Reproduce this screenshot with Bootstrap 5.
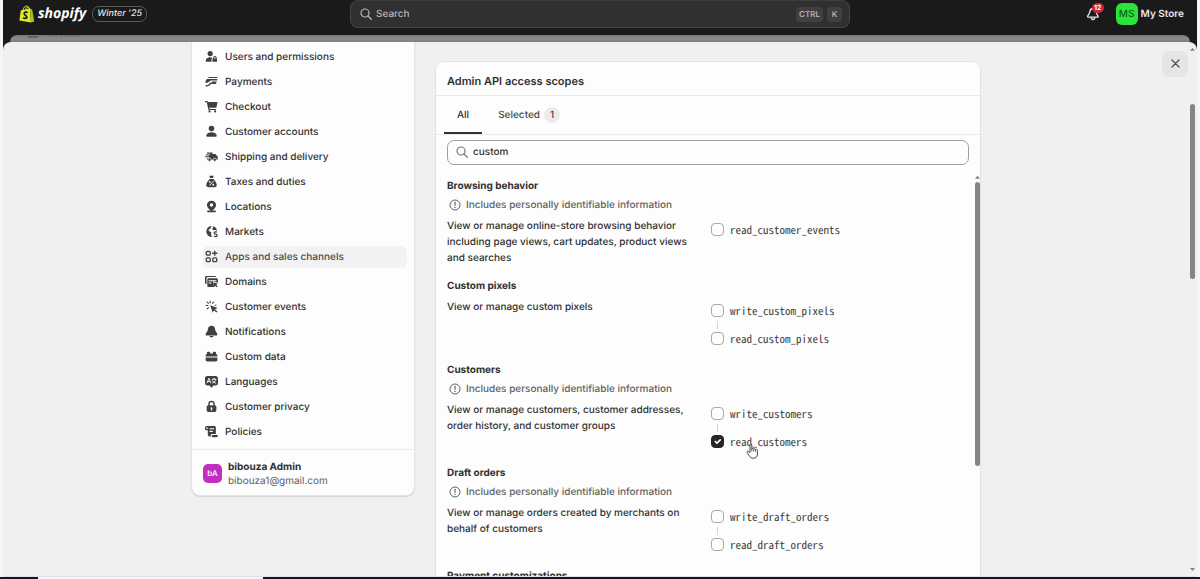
<!DOCTYPE html>
<html lang="en">
<head>
<meta charset="utf-8">
<meta name="viewport" content="width=device-width, initial-scale=1">
<title>Settings - My Store</title>
<link href="https://cdn.jsdelivr.net/npm/bootstrap@5.3.0/dist/css/bootstrap.min.css" rel="stylesheet">
<style>
  body { font-family: Inter, "Liberation Sans", sans-serif; font-size: 10px; line-height: 16px; color: #303030; background: #f5f5f6; font-weight: 450; text-rendering: geometricPrecision; }
  button, input { font: inherit; color: inherit; text-rendering: inherit; }
  .frame { margin: 0 3px; min-height: 0; background: linear-gradient(#1a1a1a 80px, #f8f8fb 80px); }
  .topbar { height: 35px; padding: 0 13px 7px; }
  .bag { margin: 0 3px; }
  .wordmark { font: italic 700 14px/20px "Open Sans", sans-serif; color: #fff; }
  .edition { font-size: 9px; line-height: 14px; font-weight: 500; font-style: italic; color: #e3e3e3; border: 1px solid #5a5a5a; border-radius: 7px; padding: 0 4px; margin-left: 6px; }
  .topsearch { width: 500px; height: 28px; background: #303030; border: 1px solid #444; border-top-color: #3c3c3c; border-radius: 8px; color: #b5b5b5; padding: 0 7px 0 9px; }
  .key { background: #404040; border-radius: 4px; font-size: 8px; line-height: 15px; font-weight: 600; padding: 0 3px; min-width: 15px; }
  .bell { width: 14px; height: 16px; color: #e3e3e3; margin-right: 16px; }
  .alerts { right: -4px; top: -3px; min-width: 12px; height: 10px; background: #c5283d; color: #fff; font-size: 7px; line-height: 10px; font-weight: 700; border-radius: 5px; }
  .store-tile { width: 22px; height: 22px; border-radius: 6px; background: #2be33a; color: #0d5c1c; line-height: 22px; }
  .store-name { font-weight: 600; color: #e8e8e8; margin-left: 3px; }
  .undersheet { height: 7px; margin: 0 7px; background: linear-gradient(#777, #8b8b8b 4px, #7d7d7d); border-radius: 7px 7px 0 0; overflow: hidden; padding-left: 18px; }
  .sheet { background: #f0f0f0; border-radius: 8px 8px 0 0; min-height: 0; border-bottom: 1px solid #e2e2e8; }
  .content-area { padding-left: 7px; min-width: 0; column-gap: 20px; }
  .side { width: 224px; }
  .panel { background: #fdfdfd; border: 1px solid #e3e3e3; }
  .side .panel { border-top: 0; border-radius: 0 0 9px 9px; box-shadow: 0 1px 1px #d4d4d4; }
  .menu { padding: 4px 7px 6px 11px; gap: 3px; }
  .menu a { height: 22px; padding-left: 2px; gap: 7px; border-radius: 6px; color: #303030; font-weight: 550; text-decoration: none; }
  .menu a.current { background: #f2f2f2; color: #4a4a4a; }
  .menu svg { width: 13px; height: 13px; fill: #404040; flex: none; }
  .account { border-top: 1px solid #ebebeb; padding: 10px 11px 7px; gap: 6px; line-height: 14px; }
  .account strong { font-weight: 650; }
  .account .quiet { font-weight: 400; }
  .avatar { width: 19px; height: 19px; border-radius: 5px; background: #c22fc0; color: #fff; font-size: 8px; line-height: 19px; font-weight: 500; }
  .quiet { color: #616161; }
  .scopes { width: 546px; margin-top: 19px; border-radius: 9px 9px 0 0; border-bottom: 0; min-width: 0; }
  h2, h3 { font-size: 10px; line-height: 16px; font-weight: 650; margin: 0; }
  .scopes h2 { font-size: 11px; font-weight: 600; padding: 11px 11px 6px; border-bottom: 1px solid #ebebeb; }
  .scope-tabs { border-bottom: 1px solid #ebebeb; height: 41px; padding: 0 8px; gap: 4px; }
  .scope-tabs button { border: 0; background: none; padding: 2px 12px 0; font-weight: 550; color: #4a4a4a; border-bottom: 2px solid transparent; }
  .scope-tabs button.active { border-color: #303030; color: #303030; padding: 2px 13px 0; }
  .count { background: #ebebeb; border-radius: 8px; width: 16px; line-height: 16px; }
  .filter { height: 26px; margin: 5px 11px 0; border: 1px solid #a0a0a0; border-radius: 7px; background: #fdfdfd; padding: 0 8px; gap: 5px; }
  .filter input { border: 0; outline: 0; background: none; padding: 0; min-width: 0; }
  .list-area { min-height: 0; padding-top: 11px; }
  .groups { padding: 2px 6px 0 11px; overflow: hidden; min-height: 0; }
  .group { padding-bottom: 12px; }
  .pii { margin-top: 3px; padding-left: 2px; gap: 5px; line-height: 16px; }
  .pair { display: grid; grid-template-columns: 1fr 1fr; gap: 6px; margin-top: 5px; }
  .checks { padding: 5px 0 4px; gap: 14px; }
  .checks label { font: 400 11px/14px "Noto Sans Mono CJK SC", "Noto Sans Mono", "DejaVu Sans Mono", monospace; color: #404040; }
  .tick { gap: 6px; height: 14px; }
  .tick .form-check-input { width: 13px; height: 13px; margin: 0; border: 1px solid #a8a8a8; border-radius: 4px; background-color: #fdfdfd; flex: none; }
  .tick .form-check-input:checked { background-color: #262626; border-color: #262626; }
  .tick + .tick::before { content: ""; position: absolute; left: 6px; top: -11px; height: 8px; border-left: 1px solid #d4d4d4; }
  .pointer { left: 35px; top: 8px; }
  .arrow { width: 5px; height: 3px; background: #858585; clip-path: polygon(50% 0, 100% 100%, 0 100%); flex: none; }
  .arrow.down { transform: rotate(180deg); }
  .list-bar { width: 5px; gap: 3px; }
  .thumb { width: 5px; background: #858585; border-radius: 3px; }
  .list-bar .thumb { height: 71%; }
  .page-bar { width: 9px; padding: 6px 0 5px; }
  .page-bar .thumb { height: 175px; margin-top: 53px; }
  .close-btn { width: 26px; height: 26px; margin-top: 9px; border: 0; border-radius: 7px; background: #e5e5e5; flex: none; }
  .edge { height: 2px; background: #15151f; padding-left: 38px; }
  .edge div { width: 225px; background: #f4f4f4; }
</style>
</head>
<body class="vh-100 d-flex flex-column overflow-hidden">
<svg class="d-none" xmlns="http://www.w3.org/2000/svg">
  <symbol id="lens" viewBox="0 0 12 12"><circle cx="5" cy="5" r="4" fill="none" stroke="currentColor" stroke-width="1.2"/><path d="M8 8l3.300 3.300" stroke="currentColor" stroke-width="1.300" stroke-linecap="round"/></symbol>
  <symbol id="notice" viewBox="0 0 12 12"><circle cx="6" cy="6" r="5" fill="none" stroke="#616161"/><path d="M6 3.300v3.200" stroke="#616161" stroke-width="1.100" stroke-linecap="round"/><circle cx="6" cy="8.400" r=".7" fill="#616161"/></symbol>
</svg>

<div class="frame flex-grow-1 d-flex flex-column">
  <header class="topbar d-flex align-items-center">
    <div class="col d-flex align-items-center">
      <svg class="bag" width="16" height="18" viewBox="0 0 16 18" aria-hidden="true"><path d="M1.800 5.300L11 3.700l1 13.700L.4 15.500z" fill="#d9ec2e"/><path d="M11 3.700l2.200.7 2 12L12 17.500z" fill="#a9c41d"/><path d="M4 5.400C4.500 2.500 6 .9 7.300 1c1.500.1 2 1.800 2 3.600M6.500 5C7 2.700 8.500 1.500 9.500 2c.8.4 1.200 1.300 1.300 2" fill="none" stroke="#d9ec2e"/><path d="M8.700 7.600C7.300 6.700 5.200 7 5.200 8.700c0 1.800 2.800 1.700 2.700 3.400-.1 1.700-2.400 1.700-3.800.5" fill="none" stroke="#1a1a1a" stroke-width="1.700"/></svg>
      <span class="wordmark">shopify</span>
      <span class="edition">Winter ’25</span>
    </div>
    <button class="topsearch d-flex align-items-center gap-1 text-start" type="button">
      <svg width="12" height="12" aria-hidden="true"><use href="#lens"/></svg>
      <span class="flex-grow-1">Search</span>
      <span class="key text-center">CTRL</span><span class="key text-center">K</span>
    </button>
    <div class="col d-flex align-items-center justify-content-end">
      <button type="button" class="bell position-relative border-0 bg-transparent p-0 d-flex align-items-center" aria-label="Notifications">
        <svg width="14" height="14" viewBox="0 0 14 14" fill="none" stroke="currentColor" stroke-width="1.300" stroke-linejoin="round"><path d="M7 1.500c-2 0-3 1.400-3.200 3.300C3.600 7 2 8 1.600 9.200c-.2.600.1.900.6.900h9.300c.6 0 .9-.4.600-.9C11.600 8 10.300 7 10.200 4.800 10 3 9 1.500 7 1.500z"/><path d="M5.200 10.400c.1 2.800 3.500 2.800 3.600 0"/></svg>
        <span class="alerts position-absolute text-center">12</span>
      </button>
      <span class="store-tile text-center">MS</span>
      <span class="store-name">My Store</span>
    </div>
  </header>
  <div class="undersheet"><svg class="d-block" width="80" height="3" aria-hidden="true"><path d="M0 2h10" stroke="#444"/><path d="M22 .5h7m3 0h20" stroke="#666" stroke-dasharray="3 1"/></svg></div>

  <div class="sheet flex-grow-1 d-flex overflow-hidden">
    <main class="content-area flex-grow-1 d-flex justify-content-center">
      <div class="side flex-shrink-0">
        <div class="panel">
          <nav class="menu d-flex flex-column" aria-label="Settings">
            <a class="d-flex align-items-center" href="#"><svg viewBox="0 0 20 20"><circle cx="8" cy="5.500" r="4"/><path d="M1 17c0-4 3-6 7-6 1.500 0 2.500.3 3.300.8-.8.700-1.300 1.500-1.300 2.700V18H2c-.6 0-1-.4-1-1z"/><path d="M12.500 13v-1.200a2.700 2.700 0 0 1 5.400 0V13h.6v5h-7v-5zm1.600 0h2.200v-1.200c0-1.400-2.200-1.400-2.200 0z" fill-rule="evenodd"/></svg>Users and permissions</a>
            <a class="d-flex align-items-center" href="#"><svg viewBox="0 0 20 20"><path d="M7 3h11c1 0 1.500.6 1.500 1.500H4.500C5.300 3.500 6 3 7 3zM3.500 6H19l-.5 2.500H9L4 12H.5c.2-3 1.200-5 3-6zM9.500 10H18l-.7 2.700c-.2.800-.8 1.300-1.600 1.300H8.500l2.500-2.500c.5-.7-.4-1.700-1.500-1.500z"/><path d="M1 17l5-1.500 4-4" fill="none" stroke="#404040" stroke-width="2"/></svg>Payments</a>
            <a class="d-flex align-items-center" href="#"><svg viewBox="0 0 20 20"><path d="M0 1.500h2.500c1 0 1.700.6 1.900 1.500H18c.8 0 1.300.6 1.100 1.400l-1.300 6.200c-.2.800-.8 1.400-1.700 1.400H6.500l.3 1.700H17v1.800H5.300L2.700 3.300H0z"/><circle cx="7" cy="17.500" r="1.700"/><circle cx="15.500" cy="17.500" r="1.700"/></svg>Checkout</a>
            <a class="d-flex align-items-center" href="#"><svg viewBox="0 0 20 20"><circle cx="10" cy="5.500" r="4.300"/><path d="M2 16.500C2 13 5.500 11 10 11s8 2 8 5.500c0 1-.6 1.500-1.500 1.500h-13C2.600 18 2 17.500 2 16.500z"/></svg>Customer accounts</a>
            <a class="d-flex align-items-center" href="#"><svg viewBox="0 0 20 20"><path d="M3 4h8.500v2H15c1.500 0 2 1 2.500 2.200l2 1.300V15H3v-2.200h4v-1.500H0V9.800h6V8.500H1.500V7H8V5.700H3z"/><circle cx="7" cy="15" r="2.500" stroke="#fdfdfd"/><circle cx="15" cy="15" r="2.500" stroke="#fdfdfd"/></svg>Shipping and delivery</a>
            <a class="d-flex align-items-center" href="#"><svg viewBox="0 0 20 20"><path d="M6.500 1h7l-1.300 3.500H7.800zM7.200 6h5.600c3 2.500 5.200 6.500 5.200 9.500 0 2.200-1.300 3.500-3.500 3.500h-9C3.300 19 2 17.700 2 15.500c0-3 2.200-7 5.200-9.500z"/><path d="M7 16l6-6.500" stroke="#fff" stroke-width="1.500"/><circle cx="7.300" cy="10.500" r="1.400" fill="#fff"/><circle cx="12.700" cy="15" r="1.400" fill="#fff"/></svg>Taxes and duties</a>
            <a class="d-flex align-items-center" href="#"><svg viewBox="0 0 20 20"><path fill-rule="evenodd" d="M10 1c4 0 7 2.800 7 6.500 0 4-3.500 6-5.500 9h-3C6.500 13.500 3 11.500 3 7.500 3 3.800 6 1 10 1zm0 4a2.700 2.700 0 1 0 0 5.400A2.700 2.700 0 0 0 10 5z"/><path d="M4.500 17.500h11" stroke="#404040" stroke-width="2.500" stroke-linecap="round"/></svg>Locations</a>
            <a class="d-flex align-items-center" href="#"><svg viewBox="0 0 20 20"><path d="M11 1.500a8.500 8.500 0 1 0-1 17c1 0 .5-2-.5-3.500-.7-1.200.5-2 .2-3.500C9.500 10 6 10.500 5.500 8.500 5 6.500 8 6.500 8.500 5S9.500 2 11 1.500z"/><path d="M13 2c3 1 5 3.500 5.400 6.500-1.800.2-2.400-1.500-4-.8C12.500 8.500 11 7 11.500 5z"/><path d="M18.500 11c-2-1-4.500-.5-4.500 1.400 0 2 4.700 1.300 4.700 3.600 0 2-3 2.300-5 1" fill="none" stroke="#404040" stroke-width="1.900"/></svg>Markets</a>
            <a class="d-flex align-items-center current" href="#" aria-current="page"><svg viewBox="0 0 20 20"><g fill="none" stroke="#404040" stroke-width="2"><rect x="2" y="2" width="6" height="6" rx="1.500"/><rect x="2" y="12" width="6" height="6" rx="1.500"/><rect x="12" y="12" width="6" height="6" rx="1.500"/><path d="M15 1v8M11 5h8"/></g></svg>Apps and sales channels</a>
            <a class="d-flex align-items-center" href="#"><svg viewBox="0 0 20 20"><path d="M0 4c0-1.500 1-2.500 2.500-2.500H15c1.200 0 2 .7 2.300 1.700H5c-1.700 0-2.700 1-2.700 2.700V14C.8 14 0 13 0 11.500z"/><path fill-rule="evenodd" d="M6 5h11.500C19 5 20 6 20 7.500V12l-8-2.500 2.500 9H6c-1.500 0-2.500-1-2.500-2.500v-8.500C3.500 6 4.500 5 6 5zM5.500 8v1.500h12V8zm0 3.500V13H10v-1.500z"/><path d="M13 11l7 2.500-2.700 1.200 2.200 2.800-1.500 1.500-2.500-2.500-1 2z"/></svg>Domains</a>
            <a class="d-flex align-items-center" href="#"><svg viewBox="0 0 20 20"><path d="M8 8l11.500 4.200-4.200 2 3.800 3.500-1.600 1.700-3.700-3.700-2 3.800z"/><path d="M8 1v4M1 8.500h4M3 3l2.700 2.700M13.500 3L11 5.700M3 14l2.700-2.700M15 8h2.500" stroke="#404040" stroke-width="1.700"/></svg>Customer events</a>
            <a class="d-flex align-items-center" href="#"><svg viewBox="0 0 20 20"><path d="M10 1c3.500 0 5.500 2.300 5.500 5.500 0 3.500 3.500 5 3.500 8 0 1-.7 1.500-1.500 1.500h-15c-.8 0-1.500-.5-1.500-1.500 0-3 3.500-4.500 3.500-8C4.500 3.300 6.500 1 10 1zM7 17h6c-.3 3-5.700 3-6 0z"/></svg>Notifications</a>
            <a class="d-flex align-items-center" href="#"><svg viewBox="0 0 20 20"><path d="M3 6V4c0-1 .6-1.500 1.500-1.500h2C7.400 2.500 8 3 8 4v1.500h4V4c0-1 .6-1.500 1.500-1.500h2c.9 0 1.500.5 1.500 1.500v2c1.300.3 2 1 2 2.300V10H1V8.300C1 7 1.700 6.300 3 6z"/><path d="M1 11.500h18V15c0 1.700-1 2.500-2.500 2.500h-13C2 17.500 1 16.700 1 15z"/></svg>Custom data</a>
            <a class="d-flex align-items-center" href="#"><svg viewBox="0 0 20 20"><path d="M3.500 1.500h13C18.500 1.500 20 3 20 5v7.500c0 2-1.500 3.500-3.500 3.500H13l-3 3.500L7 16H3.500C1.500 16 0 14.500 0 12.500V5c0-2 1.500-3.500 3.500-3.500z"/><path d="M3 12.500L6 5l3 7.500M4 10h4M10.500 6.500h7M14 4.500v2M16.500 6.500c-.5 3-2.500 5-5.500 6M11.500 8c1 2.500 3 4 5.500 4.500" fill="none" stroke="#fff" stroke-width="1.400"/></svg>Languages</a>
            <a class="d-flex align-items-center" href="#"><svg viewBox="0 0 20 20"><path fill-rule="evenodd" d="M5 8V6a5 5 0 0 1 10 0v2c1.500.2 2.500 1.200 2.500 2.800v4.700c0 2-1.200 3-3 3h-9c-1.800 0-3-1-3-3v-4.700C2.500 9.200 3.500 8.200 5 8zm2.200 0h5.600V6c0-3.600-5.600-3.600-5.600 0zM10 11a1.500 1.500 0 0 0-.9 2.700V16h1.800v-2.300A1.500 1.500 0 0 0 10 11z"/></svg>Customer privacy</a>
            <a class="d-flex align-items-center" href="#"><svg viewBox="0 0 20 20"><path fill-rule="evenodd" d="M3 1.500h11c1.700 0 2.700 1 2.700 2.700V14H9v2.500c0 .7.500 1 1 1H7c-1.700 0-2.700-1-2.700-2.700V8H1.500C.6 8 0 7.500 0 6.500v-2c0-1.800 1.200-3 3-3zM7 5v1.600h7V5zm0 4v1.600h5V9zM2 4v2h2V4z"/><path d="M10.500 15.500H20c0 2-1 3.200-2.700 3.200h-5.500c-1 0-1.300-1.300-1.300-3.200z"/></svg>Policies</a>
          </nav>
          <div class="account d-flex align-items-center">
            <span class="avatar text-center">bA</span>
            <div><strong class="d-block">bibouza Admin</strong><span class="quiet d-block">bibouza1@gmail.com</span></div>
          </div>
        </div>
      </div>

      <section class="scopes panel d-flex flex-column">
        <h2>Admin API access scopes</h2>
        <div class="scope-tabs d-flex" role="tablist">
          <button type="button" class="active" role="tab" aria-selected="true">All</button>
          <button type="button" class="d-flex align-items-center gap-1" role="tab" aria-selected="false">Selected<span class="count text-center">1</span></button>
        </div>
        <div class="filter d-flex align-items-center">
          <svg class="flex-shrink-0" width="12" height="12" color="#7a7a7a" aria-hidden="true"><use href="#lens"/></svg>
          <input class="flex-grow-1" type="text" value="custom" aria-label="Filter scopes">
        </div>
        <div class="list-area flex-grow-1 d-flex">
          <div class="groups flex-grow-1">
            <div class="group">
              <h3>Browsing behavior</h3>
              <div class="pii quiet d-flex align-items-center"><svg width="12" height="12"><use href="#notice"/></svg>Includes personally identifiable information</div>
              <div class="pair"><div class="pe-2">View or manage online-store browsing behavior including page views, cart updates, product views and searches</div>
                <div class="checks d-flex flex-column">
                  <div class="tick d-flex align-items-center position-relative"><input class="form-check-input" type="checkbox" id="c1"><label for="c1">read_customer_events</label></div>
                </div></div>
            </div>
            <div class="group">
              <h3>Custom pixels</h3>
              <div class="pair"><div class="pe-2">View or manage custom pixels</div>
                <div class="checks d-flex flex-column">
                  <div class="tick d-flex align-items-center position-relative"><input class="form-check-input" type="checkbox" id="c2"><label for="c2">write_custom_pixels</label></div>
                  <div class="tick d-flex align-items-center position-relative"><input class="form-check-input" type="checkbox" id="c3"><label for="c3">read_custom_pixels</label></div>
                </div></div>
            </div>
            <div class="group">
              <h3>Customers</h3>
              <div class="pii quiet d-flex align-items-center"><svg width="12" height="12"><use href="#notice"/></svg>Includes personally identifiable information</div>
              <div class="pair"><div class="pe-2">View or manage customers, customer addresses, order history, and customer groups</div>
                <div class="checks d-flex flex-column">
                  <div class="tick d-flex align-items-center position-relative"><input class="form-check-input" type="checkbox" id="c4"><label for="c4">write_customers</label></div>
                  <div class="tick d-flex align-items-center position-relative"><input class="form-check-input" type="checkbox" id="c5" checked><label for="c5">read_customers</label>
                    <svg class="pointer position-absolute" width="13" height="16" viewBox="0 0 13 16" aria-hidden="true"><path d="M4 9.500V2c0-1.300 1.800-1.300 1.800 0v4c.3-.9 1.700-.8 1.900.2.400-.7 1.600-.6 1.800.4.500-.6 1.900-.4 1.900.9v3.500c0 2.700-1.500 4.300-4 4.300-2.200 0-3.200-1-4.200-2.700L1.200 9.700c-.6-1.200.7-1.900 1.500-1.100z" fill="#fff" stroke="#333" stroke-width=".9"/><path d="M5.800 6v2.500M7.700 6.300v2.200M9.500 6.800v1.900" stroke="#333" stroke-width=".8"/></svg></div>
                </div></div>
            </div>
            <div class="group">
              <h3>Draft orders</h3>
              <div class="pii quiet d-flex align-items-center"><svg width="12" height="12"><use href="#notice"/></svg>Includes personally identifiable information</div>
              <div class="pair"><div class="pe-2">View or manage orders created by merchants on behalf of customers</div>
                <div class="checks d-flex flex-column">
                  <div class="tick d-flex align-items-center position-relative"><input class="form-check-input" type="checkbox" id="c6"><label for="c6">write_draft_orders</label></div>
                  <div class="tick d-flex align-items-center position-relative"><input class="form-check-input" type="checkbox" id="c7"><label for="c7">read_draft_orders</label></div>
                </div></div>
            </div>
            <div class="group"><h3>Payment customizations</h3></div>
          </div>
          <div class="list-bar d-flex flex-column flex-shrink-0"><span class="arrow"></span><span class="thumb"></span></div>
        </div>
      </section>
    </main>
    <button class="close-btn d-flex align-items-center justify-content-center p-0" type="button" aria-label="Close"><svg width="9" height="9" viewBox="0 0 9 9"><path d="M1 1l7 7M8 1L1 8" stroke="#4a4a4a" stroke-width="1.200" stroke-linecap="round"/></svg></button>
    <div class="page-bar d-flex flex-column align-items-center flex-shrink-0"><span class="arrow"></span><span class="thumb"></span><span class="arrow down mt-auto"></span></div>
  </div>
</div>
<div class="edge d-flex"><div></div></div>
<script src="https://cdn.jsdelivr.net/npm/bootstrap@5.3.0/dist/js/bootstrap.bundle.min.js"></script>
</body>
</html>
